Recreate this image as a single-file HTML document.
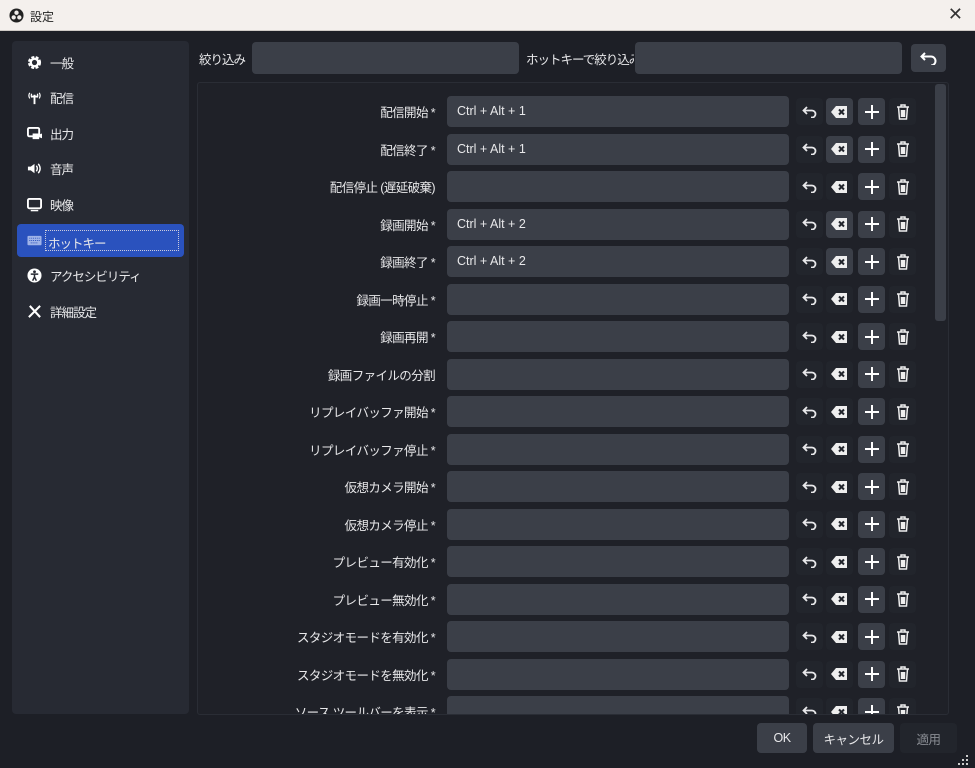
<!DOCTYPE html>
<html><head><meta charset="utf-8"><style>
*{box-sizing:border-box;margin:0;padding:0}
body{width:975px;height:768px;overflow:hidden;background:#1d1f26;font-family:"Liberation Sans","Noto Sans CJK JP",sans-serif;font-size:12px;color:#e8e8ea;position:relative}
.tb{position:absolute;left:0;top:0;width:975px;height:31px;background:#f4f0ed;color:#222;border-bottom:1px solid #cfcac6}
.tb .t{position:absolute;left:30px;top:8px;font-size:12px}
.tb .x{position:absolute;right:12px;top:4px;font-size:18px;color:#333}
.side{position:absolute;left:12px;top:41px;width:177px;height:673px;background:#272a33;border-radius:4px}
.it{position:absolute;left:5px;width:167px;height:33px;border-radius:4px;display:flex;align-items:center;padding-left:10px;font-size:12.5px;letter-spacing:-1px}
.it svg{margin-right:8px}
.sel{background:#2a52be}
.ab{position:absolute}
.inp{position:absolute;background:#3b3f48;border-radius:4px}
.panel{position:absolute;left:197px;top:82px;width:752px;height:633px;background:#1f2128;border:1px solid #2a2d35;border-radius:3px;overflow:hidden}
.row{position:absolute;left:0;width:750px;height:32px}
.lbl{position:absolute;right:513px;top:6px;white-space:nowrap;font-size:12.5px;letter-spacing:-0.6px}
.ri{position:absolute;left:249px;top:0;width:342px;height:31px;background:#3b3f48;border-radius:4px;padding:8px 10px;font-size:12.5px}
.b{position:absolute;top:2px;width:27px;height:27px;border-radius:4px;display:flex;align-items:center;justify-content:center;background:#22252c}
.b.on{background:#3b3f48}
.btn{position:absolute;top:723px;height:30px;border-radius:4px;background:#3b3f48;display:flex;align-items:center;justify-content:center;font-size:12.5px;letter-spacing:-0.5px}
.tl{letter-spacing:-1px;font-size:12.5px;white-space:nowrap}
</style></head><body>
<div class="tb"><svg class="ab" style="left:9px;top:8px" width="15" height="15" viewBox="0 0 16 16"><circle cx="8" cy="8" r="7.5" fill="#222"/><circle cx="8" cy="5" r="2.3" fill="#f2eeeb"/><circle cx="5" cy="10" r="2.3" fill="#f2eeeb"/><circle cx="11" cy="10" r="2.3" fill="#f2eeeb"/></svg><span class="t">設定</span><span class="x">✕</span></div>

<div class="side">
<div class="it" style="top:5px"><svg width="15" height="15" viewBox="0 0 16 16"><circle cx="8" cy="8" r="5.5" fill="none" stroke="#fff" stroke-width="3" stroke-dasharray="3 1.5"/><circle cx="8" cy="8" r="4" fill="none" stroke="#fff" stroke-width="2.5"/></svg>一般</div>
<div class="it" style="top:40px"><svg width="15" height="15" viewBox="0 0 16 16" fill="none" stroke="#fff" stroke-width="1.3"><path d="M3 3q-2 3 0 6M13 3q2 3 0 6M5 4q-1 2 0 4M11 4q1 2 0 4"/><path d="M8 5v10M5 7h6" stroke-width="2"/></svg>配信</div>
<div class="it" style="top:76px"><svg width="15" height="15" viewBox="0 0 16 16"><rect x="1" y="2" width="12" height="9" rx="1.5" fill="none" stroke="#fff" stroke-width="2"/><rect x="6" y="8" width="7" height="6" fill="#fff"/><path d="M13 9l3-1v5l-3-1z" fill="#fff"/></svg>出力</div>
<div class="it" style="top:111px"><svg width="15" height="15" viewBox="0 0 16 16"><path d="M1 6h3l4-3v10l-4-3H1z" fill="#fff"/><path d="M10 5q2 3 0 6M12 3q4 5 0 10" stroke="#fff" stroke-width="1.5" fill="none"/></svg>音声</div>
<div class="it" style="top:147px"><svg width="15" height="15" viewBox="0 0 16 16"><rect x="1" y="2" width="14" height="10" rx="1.5" fill="none" stroke="#fff" stroke-width="2"/><path d="M4 14.5h8" stroke="#fff" stroke-width="1.5"/></svg>映像</div>
<div class="it sel" style="top:183px"><svg width="15" height="15" viewBox="0 0 16 16"><rect x="0.5" y="3" width="15" height="10" rx="1" fill="#9fb3e8"/><path d="M2.5 5.5h11M2.5 8h11M4 10.5h8" stroke="#2a52be" stroke-width="1" stroke-dasharray="1 1"/></svg><span style="border:1px dotted #ccd;width:134px;height:21px;padding:2px 2px;margin-left:-5px">ホットキー</span></div>
<div class="it" style="top:218px"><svg width="15" height="15" viewBox="0 0 16 16"><circle cx="8" cy="8" r="7.5" fill="#fff"/><circle cx="8" cy="4" r="1.5" fill="#272a33"/><path d="M4 6.5h8M8 6.5v3l-2 4M8 9.5l2 4" stroke="#272a33" stroke-width="1.6" fill="none"/></svg>アクセシビリティ</div>
<div class="it" style="top:254px"><svg width="15" height="15" viewBox="0 0 16 16" stroke="#fff" stroke-width="2.2" fill="none"><path d="M2 14L14 2M3 2l11 12"/></svg>詳細設定</div>
</div>

<div class="ab tl" style="left:199px;top:49px">絞り込み</div>
<div class="inp" style="left:252px;top:42px;width:267px;height:32px"></div>
<div class="ab tl" style="left:526px;top:49px;width:108px;overflow:hidden">ホットキーで絞り込み</div>
<div class="inp" style="left:635px;top:42px;width:267px;height:32px"></div>
<div class="inp" style="left:911px;top:44px;width:35px;height:28px;display:flex;align-items:center;justify-content:center"><svg width="18" height="14" viewBox="0 0 18 14" fill="none" stroke="#fff" stroke-width="2"><path d="M5 2L1.5 5.5 5 9M2 5.5h9a4.5 4.5 0 0 1 0 9"/></svg></div>

<div class="panel">
<div class="ab" style="left:737px;top:1px;width:11px;height:237px;background:#3b3f48;border-radius:3px"></div>
<div id="rows"></div>
</div>

<div class="btn" style="left:757px;width:50px">OK</div>
<div class="btn" style="left:813px;width:81px">キャンセル</div>
<div class="btn" style="left:900px;width:57px;background:#22252c;color:#8a8d94">適用</div>
<svg class="ab" style="left:958px;top:755px" width="12" height="10"><g fill="#ccc"><rect x="8" y="0" width="2" height="2"/><rect x="4" y="4" width="2" height="2"/><rect x="8" y="4" width="2" height="2"/><rect x="0" y="8" width="2" height="2"/><rect x="4" y="8" width="2" height="2"/><rect x="8" y="8" width="2" height="2"/></g></svg>

<script>
var L=[["配信開始 *","Ctrl + Alt + 1"],["配信終了 *","Ctrl + Alt + 1"],["配信停止 (遅延破棄)",""],["録画開始 *","Ctrl + Alt + 2"],["録画終了 *","Ctrl + Alt + 2"],["録画一時停止 *",""],["録画再開 *",""],["録画ファイルの分割",""],["リプレイバッファ開始 *",""],["リプレイバッファ停止 *",""],["仮想カメラ開始 *",""],["仮想カメラ停止 *",""],["プレビュー有効化 *",""],["プレビュー無効化 *",""],["スタジオモードを有効化 *",""],["スタジオモードを無効化 *",""],["ソース ツールバーを表示 *",""]];
var undo='<svg width="16" height="12" viewBox="0 0 16 12" fill="none" stroke="#e8e8ea" stroke-width="1.8"><path d="M5 1L1.5 4.5 5 8M2 4.5h8a3.5 3.5 0 0 1 0 7H9"/></svg>';
var clr='<svg width="17" height="12" viewBox="0 0 17 12"><path d="M5 0h11v12H5L0 6z" fill="#eee"/><path d="M8 3.5l5 5M13 3.5l-5 5" stroke="#22252c" stroke-width="2"/></svg>';
var plus='<svg width="16" height="16"><path d="M8 1v14M1 8h14" stroke="#fff" stroke-width="2"/></svg>';
var tr='<svg width="14" height="16" viewBox="0 0 14 16" fill="none" stroke="#eee" stroke-width="1.5"><path d="M1 3h12M5 3V1h4v2M2.5 3l1 12h7l1-12M5.5 6v7M7 6v7M8.5 6v7"/></svg>';
var h='';
for(var i=0;i<L.length;i++){var y=13+i*37.5;var on=L[i][1]!=='';
h+='<div class="row" style="top:'+y+'px"><div class="lbl">'+L[i][0]+'</div><div class="ri">'+L[i][1]+'</div>'+
'<div class="b" style="left:598px">'+undo+'</div><div class="b'+(on?' on':'')+'" style="left:628px">'+clr+'</div><div class="b on" style="left:660px">'+plus+'</div><div class="b" style="left:691px">'+tr+'</div></div>';}
document.getElementById('rows').innerHTML=h;
</script>
</body></html>
